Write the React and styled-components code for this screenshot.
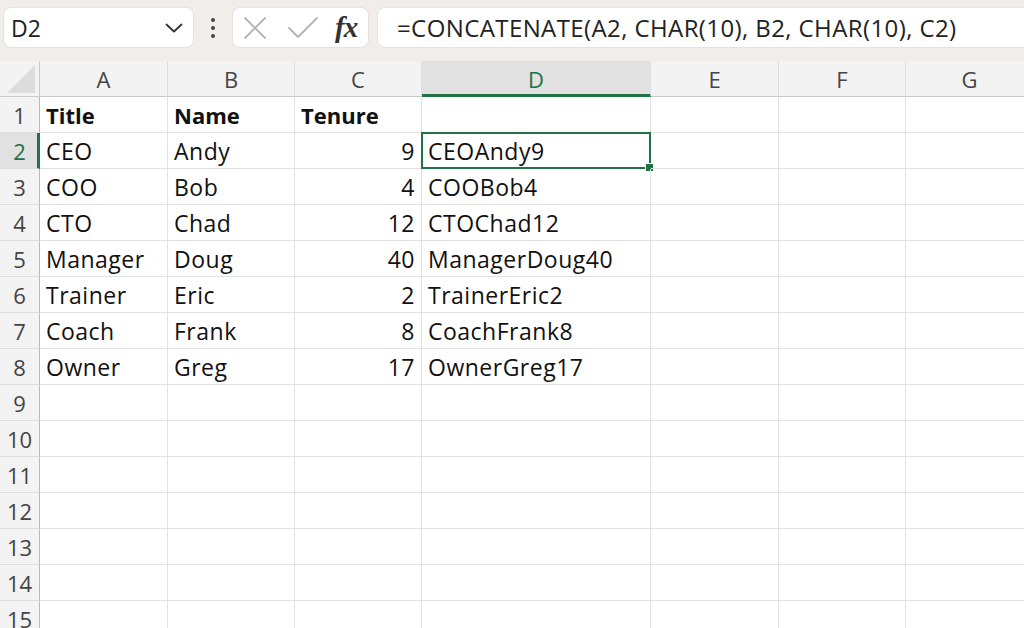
import styled, { createGlobalStyle } from 'styled-components';

const Global = createGlobalStyle`
    html, body {
        margin: 0;
        padding: 0;
        background: #ffffff;
        overflow: hidden;
    }
    body {
        font-family: "Open Sans", "Noto Sans", sans-serif;
    }
`

const green = '#217346'

const Page = styled.div`
    width: 1024px;
    height: 628px;
    overflow: hidden;
    display: flex;
    flex-direction: column;
    background: #ffffff;
`

const Toolbar = styled.div`
    height: 61px;
    flex: none;
    background: #f1edeb;
    display: flex;
    align-items: flex-start;
    padding: 8px 0 0 4px;
    box-sizing: border-box;
`

const NameBox = styled.div`
    width: 189px;
    height: 39px;
    box-sizing: border-box;
    background: #fff;
    border-radius: 7px;
    display: flex;
    align-items: center;
    justify-content: space-between;
    padding: 0 10px 0 7px;
    font-size: 23px;
    color: #222;
    box-shadow: 0 0 0 1px #e6e2df;
`

const Dots = styled.div`
    width: 40px;
    height: 39px;
    display: flex;
    flex-direction: column;
    align-items: center;
    justify-content: center;
    gap: 4px;
    span {
        width: 4px;
        height: 4px;
        border-radius: 50%;
        background: #444;
    }
`

const FxBox = styled.div`
    width: 135px;
    height: 39px;
    box-sizing: border-box;
    background: #fff;
    border-radius: 7px;
    display: flex;
    align-items: center;
    padding: 0 8px 0 10px;
    gap: 20px;
    box-shadow: 0 0 0 1px #e6e2df;
`

const Fx = styled.span`
    font-family: "Liberation Serif", "DejaVu Serif", serif;
    font-style: italic;
    font-weight: 700;
    font-size: 29px;
    color: #333;
    margin-left: -4px;
    letter-spacing: -1px;
`

const FormulaBox = styled.div`
    margin-left: 10px;
    flex: 1;
    height: 39px;
    box-sizing: border-box;
    background: #fff;
    border-radius: 7px 0 0 7px;
    display: flex;
    align-items: center;
    padding-left: 19px;
    font-size: 24px;
    letter-spacing: 0.4px;
    color: #222;
    box-shadow: 0 0 0 1px #e6e2df;
    white-space: nowrap;
`

const Sheet = styled.div`
    display: grid;
    grid-template-columns: 40px 128px 127px 127px 229px 128px 127px 128px;
    grid-auto-rows: 36px;
`

const Corner = styled.div`
    background: #f3f3f3;
    border-right: 1px solid #c9c9c9;
    border-bottom: 1px solid #c9c9c9;
    box-sizing: border-box;
    position: relative;
    &::after {
        content: '';
        position: absolute;
        right: 4px;
        bottom: 3px;
        width: 0;
        height: 0;
        border-left: 28px solid transparent;
        border-bottom: 28px solid #dcdcdc;
    }
`

const ColHead = styled.div`
    background: ${p => p.$active ? '#e1e1e1' : '#f3f3f3'};
    color: ${p => p.$active ? green : '#444'};
    border-right: 1px solid #dedede;
    border-bottom: ${p => p.$active ? `3px solid ${green}` : '1px solid #c9c9c9'};
    box-sizing: border-box;
    display: flex;
    align-items: center;
    justify-content: center;
    font-size: 22px;
    padding-top: ${p => p.$active ? '2px' : '0'};
`

const RowHead = styled.div`
    background: ${p => p.$active ? '#e1e1e1' : '#f3f3f3'};
    color: ${p => p.$active ? green : '#444'};
    border-right: ${p => p.$active ? `3px solid ${green}` : '1px solid #b9b9b9'};
    border-bottom: 1px solid #dedede;
    box-sizing: border-box;
    display: flex;
    align-items: center;
    justify-content: center;
    font-size: 22px;
    padding-left: ${p => p.$active ? '2px' : '0'};
`

const Cell = styled.div`
    border-right: 1px solid #e1e1e1;
    border-bottom: 1px solid #e1e1e1;
    box-sizing: border-box;
    display: flex;
    align-items: center;
    justify-content: ${p => p.$num ? 'flex-end' : 'flex-start'};
    padding: 0 6px;
    font-size: ${p => p.$bold ? '22px' : '23px'};
    letter-spacing: ${p => p.$bold ? '0' : '0.5px'};
    font-weight: ${p => p.$bold ? 700 : 400};
    color: #111;
    white-space: nowrap;
    position: relative;
    ${p => p.$selected && `
        &::before {
            content: '';
            position: absolute;
            left: -1px;
            top: -1px;
            right: -1px;
            bottom: -1px;
            border: 2px solid ${green};
            pointer-events: none;
        }
        &::after {
            content: '';
            position: absolute;
            right: -4px;
            bottom: -4px;
            width: 7px;
            height: 7px;
            background: ${green};
            border: 1px solid #fff;
        }
    `}
`

const cols = ['A', 'B', 'C', 'D', 'E', 'F', 'G']

const data = [
    ['Title', 'Name', 'Tenure', ''],
    ['CEO', 'Andy', '9', 'CEOAndy9'],
    ['COO', 'Bob', '4', 'COOBob4'],
    ['CTO', 'Chad', '12', 'CTOChad12'],
    ['Manager', 'Doug', '40', 'ManagerDoug40'],
    ['Trainer', 'Eric', '2', 'TrainerEric2'],
    ['Coach', 'Frank', '8', 'CoachFrank8'],
    ['Owner', 'Greg', '17', 'OwnerGreg17'],
]

function Chevron(){
    return(
        <svg width="18" height="10" viewBox="0 0 18 10">
            <path d="M1.5 1.5 L9 8.5 L16.5 1.5" fill="none" stroke="#333" strokeWidth="1.8" strokeLinecap="round" strokeLinejoin="round" />
        </svg>
    )
}

function Cross(){
    return(
        <svg width="24" height="24" viewBox="0 0 24 24">
            <path d="M2 2 L22 22 M22 2 L2 22" stroke="#b3b3b3" strokeWidth="1.8" strokeLinecap="round" />
        </svg>
    )
}

function Check(){
    return(
        <svg width="32" height="24" viewBox="0 0 32 24">
            <path d="M2 12 L11 21 L30 2" fill="none" stroke="#b3b3b3" strokeWidth="1.8" strokeLinecap="round" strokeLinejoin="round" />
        </svg>
    )
}

function App(){
    const rows = []
    for(let r = 1; r <= 15; r++){
        const vals = data[r - 1] || []
        rows.push(
            <RowHead key={'h' + r} $active={r === 2}>{r}</RowHead>
        )
        cols.forEach((c, i) => {
            rows.push(
                <Cell
                    key={c + r}
                    $bold={r === 1}
                    $num={i === 2 && r > 1}
                    $selected={c === 'D' && r === 2}
                >
                    {vals[i] || ''}
                </Cell>
            )
        })
    }

    return(
        <Page>
            <Global />
            <Toolbar>
                <NameBox>
                    <span>D2</span>
                    <Chevron />
                </NameBox>
                <Dots><span /><span /><span /></Dots>
                <FxBox>
                    <Cross />
                    <Check />
                    <Fx>fx</Fx>
                </FxBox>
                <FormulaBox>=CONCATENATE(A2, CHAR(10), B2, CHAR(10), C2)</FormulaBox>
            </Toolbar>
            <Sheet>
                <Corner />
                {cols.map(c => (
                    <ColHead key={c} $active={c === 'D'}>{c}</ColHead>
                ))}
                {rows}
            </Sheet>
        </Page>
    )
}

export default App
